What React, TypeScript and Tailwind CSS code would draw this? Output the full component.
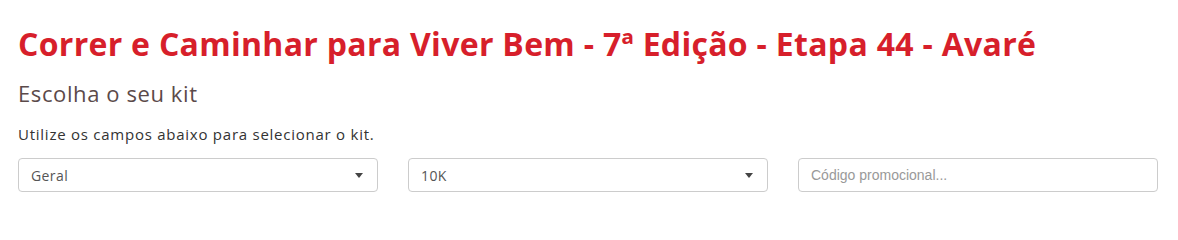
import React from "react";

const Caret = () => (
  <svg width="8" height="5" viewBox="0 0 8 5" className="shrink-0">
    <path d="M0 0 L8 0 L4 5 Z" fill="#444" />
  </svg>
);

function SelectBox({ value }: { value: string }) {
  return (
    <div className="flex h-[34px] items-center justify-between rounded-[4px] border border-[#ccc] bg-white pl-[12px] pr-[14px]">
      <span className="text-[14px] tracking-[0.4px] text-[#555]">{value}</span>
      <Caret />
    </div>
  );
}

export default function App() {
  return (
    <div className="h-[201px] w-[1178px] overflow-hidden bg-white px-[18px] pt-[22px] font-['Open_Sans',sans-serif]">
      <h1 className="whitespace-nowrap text-[32px] font-bold leading-[44px] tracking-[0.3px] text-[#d71f2b]">
        Correr e Caminhar para Viver Bem - 7ª Edição - Etapa 44 - Avaré
      </h1>
      <h2 className="mt-[13px] text-[22px] font-normal leading-[28px] tracking-[0.6px] text-[#5b4a4a]">
        Escolha o seu kit
      </h2>
      <p className="mt-[17px] text-[15px] leading-[20px] tracking-[0.75px] text-[#333]">
        Utilize os campos abaixo para selecionar o kit.
      </p>
      <div className="mt-[14px] grid grid-cols-[360px_360px_360px] gap-[30px]">
        <SelectBox value="Geral" />
        <SelectBox value="10K" />
        <input
          className="h-[34px] rounded-[4px] border border-[#ccc] px-[12px] font-['Liberation_Sans',Arial,sans-serif] text-[14px] text-[#555] placeholder:text-[#999] outline-none"
          placeholder="Código promocional..."
        />
      </div>
    </div>
  );
}
